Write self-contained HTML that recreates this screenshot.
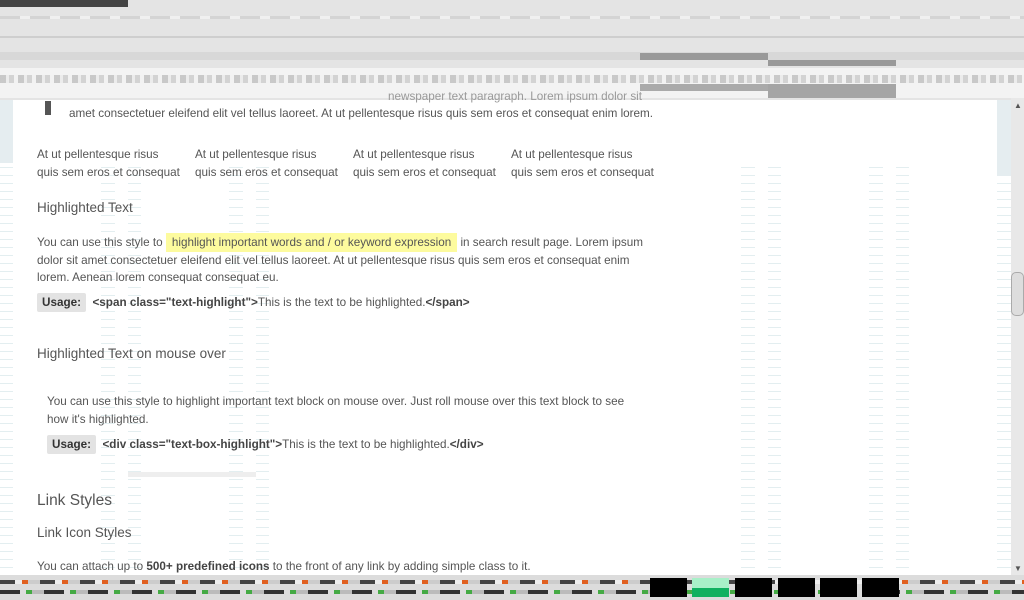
<!DOCTYPE html>
<html><head><meta charset="utf-8"><style>
*{margin:0;padding:0;box-sizing:border-box}
body{width:1024px;height:600px;overflow:hidden;position:relative;background:#fff;font-family:"Liberation Sans",sans-serif;color:#555;font-size:11px}
.a{position:absolute}
.t{position:absolute;white-space:nowrap;font-size:11.7px;color:#555}
.h{position:absolute;white-space:nowrap;font-size:13.5px;color:#555}
.dash{position:absolute;top:160px;height:415px;background:repeating-linear-gradient(to bottom,transparent 0,transparent 7px,#e3eef0 7px,#e3eef0 8px)}
.u{background:#e3e3e3;color:#333;font-weight:bold;padding:3px 5px;border-radius:2px}
b{color:#444}
</style></head><body>
<div class="dash" style="left:0;width:13px"></div>
<div class="dash" style="left:101px;width:14px"></div>
<div class="dash" style="left:128px;width:13px"></div>
<div class="dash" style="left:229px;width:14px"></div>
<div class="dash" style="left:256px;width:13px"></div>
<div class="dash" style="left:741px;width:14px"></div>
<div class="dash" style="left:768px;width:13px"></div>
<div class="dash" style="left:869px;width:14px"></div>
<div class="dash" style="left:896px;width:13px"></div>
<div class="dash" style="left:997px;width:14px"></div>
<div class="a" style="left:0;top:100px;width:13px;height:63px;background:#e5edf0"></div>
<div class="a" style="left:997px;top:100px;width:14px;height:76px;background:#e5edf0"></div>
<!-- top band -->
<div class="a" style="left:0;top:0;width:1024px;height:100px;background:#e4e4e4"></div>
<div class="a" style="left:0;top:0;width:128px;height:7px;background:#444"></div>
<div class="a" style="left:0;top:16px;width:1024px;height:3px;background:repeating-linear-gradient(90deg,#d4d4d4 0 20px,#f0f0f0 20px 30px)"></div>
<div class="a" style="left:0;top:36px;width:1024px;height:2px;background:#777;opacity:.2"></div>
<div class="a" style="left:0;top:52px;width:1024px;height:8px;background:#d8d8d8"></div>
<div class="a" style="left:0;top:68px;width:1024px;height:30px;background:#f3f3f3"></div>
<div class="a" style="left:0;top:75px;width:1024px;height:8px;background:repeating-linear-gradient(90deg,#666 0 6px,#ddd 6px 9px,#888 9px 14px,#eee 14px 18px);opacity:.3"></div>
<div class="a" style="left:640px;top:53px;width:128px;height:7px;background:#999"></div>
<div class="a" style="left:640px;top:84px;width:128px;height:7px;background:#aaa"></div>
<div class="a" style="left:768px;top:60px;width:128px;height:6px;background:#999"></div>
<div class="a" style="left:768px;top:84px;width:128px;height:14px;background:#a5a5a5"></div>
<div class="a" style="left:45px;top:101px;width:6px;height:14px;background:#555"></div>
<div class="t" style="left:388px;top:90px;color:#999">newspaper text paragraph. Lorem ipsum dolor sit</div>
<div class="t" style="left:69px;top:107px">amet consectetuer eleifend elit vel tellus laoreet. At ut pellentesque risus quis sem eros et consequat enim lorem.</div>
<!-- columns -->
<div class="t" style="left:37px;top:146px;line-height:18px">At ut pellentesque risus<br>quis sem eros et consequat</div>
<div class="t" style="left:195px;top:146px;line-height:18px">At ut pellentesque risus<br>quis sem eros et consequat</div>
<div class="t" style="left:353px;top:146px;line-height:18px">At ut pellentesque risus<br>quis sem eros et consequat</div>
<div class="t" style="left:511px;top:146px;line-height:18px">At ut pellentesque risus<br>quis sem eros et consequat</div>
<div class="h" style="left:37px;top:200px">Highlighted Text</div>
<div class="t" style="left:37px;top:234px;line-height:17.5px">You can use this style to <span style="background:#fdfb9e;padding:3px 6px">highlight important words and / or keyword expression</span> in search result page. Lorem ipsum<br>dolor sit amet consectetuer eleifend elit vel tellus laoreet. At ut pellentesque risus quis sem eros et consequat enim<br>lorem. Aenean lorem consequat consequat eu.</div>
<div class="t" style="left:37px;top:296px"><span class="u">Usage:</span> &nbsp;<b>&lt;span class="text-highlight"&gt;</b>This is the text to be highlighted.<b>&lt;/span&gt;</b></div>
<div class="h" style="left:37px;top:346px">Highlighted Text on mouse over</div>
<div class="t" style="left:47px;top:393px;line-height:18px">You can use this style to highlight important text block on mouse over. Just roll mouse over this text block to see<br>how it's highlighted.</div>
<div class="t" style="left:47px;top:438px"><span class="u">Usage:</span> &nbsp;<b>&lt;div class="text-box-highlight"&gt;</b>This is the text to be highlighted.<b>&lt;/div&gt;</b></div>
<div class="a" style="left:128px;top:472px;width:128px;height:5px;background:#eee"></div>
<div class="h" style="left:37px;top:492px;font-size:15.5px">Link Styles</div>
<div class="h" style="left:37px;top:525px">Link Icon Styles</div>
<div class="t" style="left:37px;top:560px">You can attach up to <b>500+ predefined icons</b> to the front of any link by adding simple class to it.</div>
<!-- scrollbar -->
<div class="a" style="left:1011px;top:98px;width:13px;height:478px;background:#e8e8e8"></div>
<div class="a" style="left:1014px;top:101px;color:#555;font-size:8px">▲</div>
<div class="a" style="left:1014px;top:564px;color:#555;font-size:8px">▼</div>
<div class="a" style="left:1011px;top:272px;width:13px;height:44px;background:#ddd;border:1px solid #aaa;border-radius:5px"></div>
<!-- bottom band -->
<div class="a" style="left:0;top:575px;width:1024px;height:25px;background:#dcdcdc"></div>
<div class="a" style="left:0;top:580px;width:1024px;height:4px;background:repeating-linear-gradient(90deg,#444 0 15px,#eee 15px 22px,#e06020 22px 28px,#ccc 28px 40px)"></div>
<div class="a" style="left:0;top:590px;width:1024px;height:4px;background:repeating-linear-gradient(90deg,#333 0 20px,#ddd 20px 26px,#4a4 26px 32px,#bbb 32px 44px)"></div>
<div class="a" style="left:650px;top:578px;width:37px;height:19px;background:#000"></div>
<div class="a" style="left:692px;top:578px;width:37px;height:19px;background:#a8f0c8"></div>
<div class="a" style="left:692px;top:588px;width:37px;height:9px;background:#10b060"></div>
<div class="a" style="left:735px;top:578px;width:37px;height:19px;background:#000"></div>
<div class="a" style="left:778px;top:578px;width:37px;height:19px;background:#000"></div>
<div class="a" style="left:820px;top:578px;width:37px;height:19px;background:#000"></div>
<div class="a" style="left:862px;top:578px;width:37px;height:19px;background:#000"></div>
</body></html>
